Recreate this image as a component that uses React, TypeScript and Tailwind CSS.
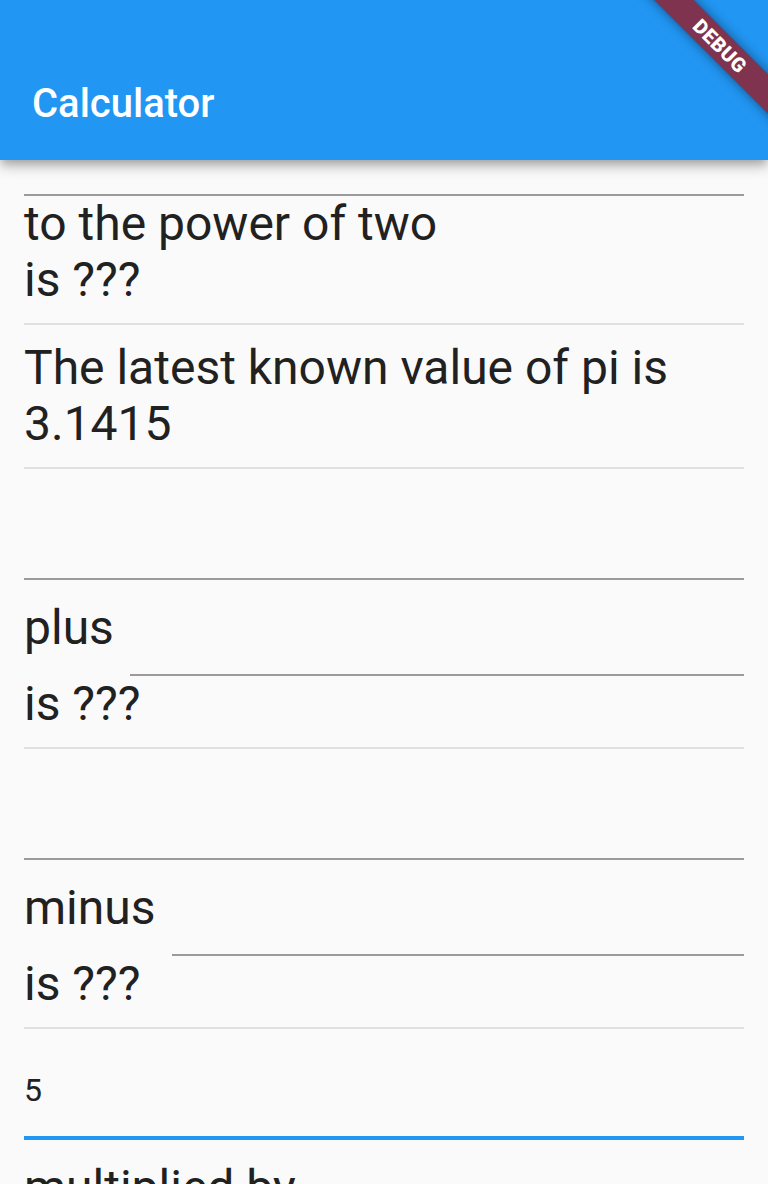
const TEXT = "text-[48px] leading-[56px] text-[#212121]";

function EmptyField({ className = "" }: { className?: string }) {
  return <div className={`h-[96px] border-b-2 border-[#9b9b9b] ${className}`} />;
}

function Divider() {
  return (
    <div className="flex h-[32px] items-center">
      <div className="h-[2px] w-full bg-[#e0e0e0]" />
    </div>
  );
}

function OperandRow({ label }: { label: string }) {
  return (
    <div className="flex h-[96px] items-center">
      <span className={`${TEXT} whitespace-nowrap`}>{label}</span>
      <EmptyField className="ml-4 flex-1" />
    </div>
  );
}

function Operation({ label }: { label: string }) {
  return (
    <>
      <EmptyField />
      <OperandRow label={label} />
      <p className={TEXT}>is ???</p>
      <Divider />
    </>
  );
}

export default function App() {
  return (
    <div className="relative h-[1184px] w-[768px] overflow-hidden bg-[#fafafa] font-['Roboto',sans-serif]">
      <header className="relative z-10 flex h-[160px] items-end bg-[#2196f3] shadow-[0_4px_8px_-2px_rgba(0,0,0,0.2),0_8px_10px_0_rgba(0,0,0,0.14),0_2px_20px_0_rgba(0,0,0,0.12)]">
        <div className="flex h-[112px] items-center pl-8 text-[40px] font-medium text-white">
          Calculator
        </div>
      </header>

      <main className="px-6">
        <div className="h-[36px] border-b-2 border-[#9b9b9b]" />
        <p className={TEXT}>to the power of two</p>
        <p className={TEXT}>is ???</p>
        <Divider />

        <p className={TEXT}>
          The latest known value of pi is
          <br />
          3.1415
        </p>
        <Divider />

        <Operation label="plus" />
        <Operation label="minus" />

        <div className="h-[96px] border-b-4 border-[#2196f3] pt-[28px]">
          <span className="text-[32px] leading-[37px] text-[#212121]">5</span>
        </div>
        <OperandRow label="multiplied by" />
      </main>

      <div className="absolute left-[600px] top-[32px] z-20 h-[28px] w-[240px] rotate-45 bg-[#7f334e] text-center text-[20px] leading-[28px] font-black tracking-wide text-white shadow-[0_0_12px_rgba(0,0,0,0.45)]">
        DEBUG
      </div>
    </div>
  );
}
